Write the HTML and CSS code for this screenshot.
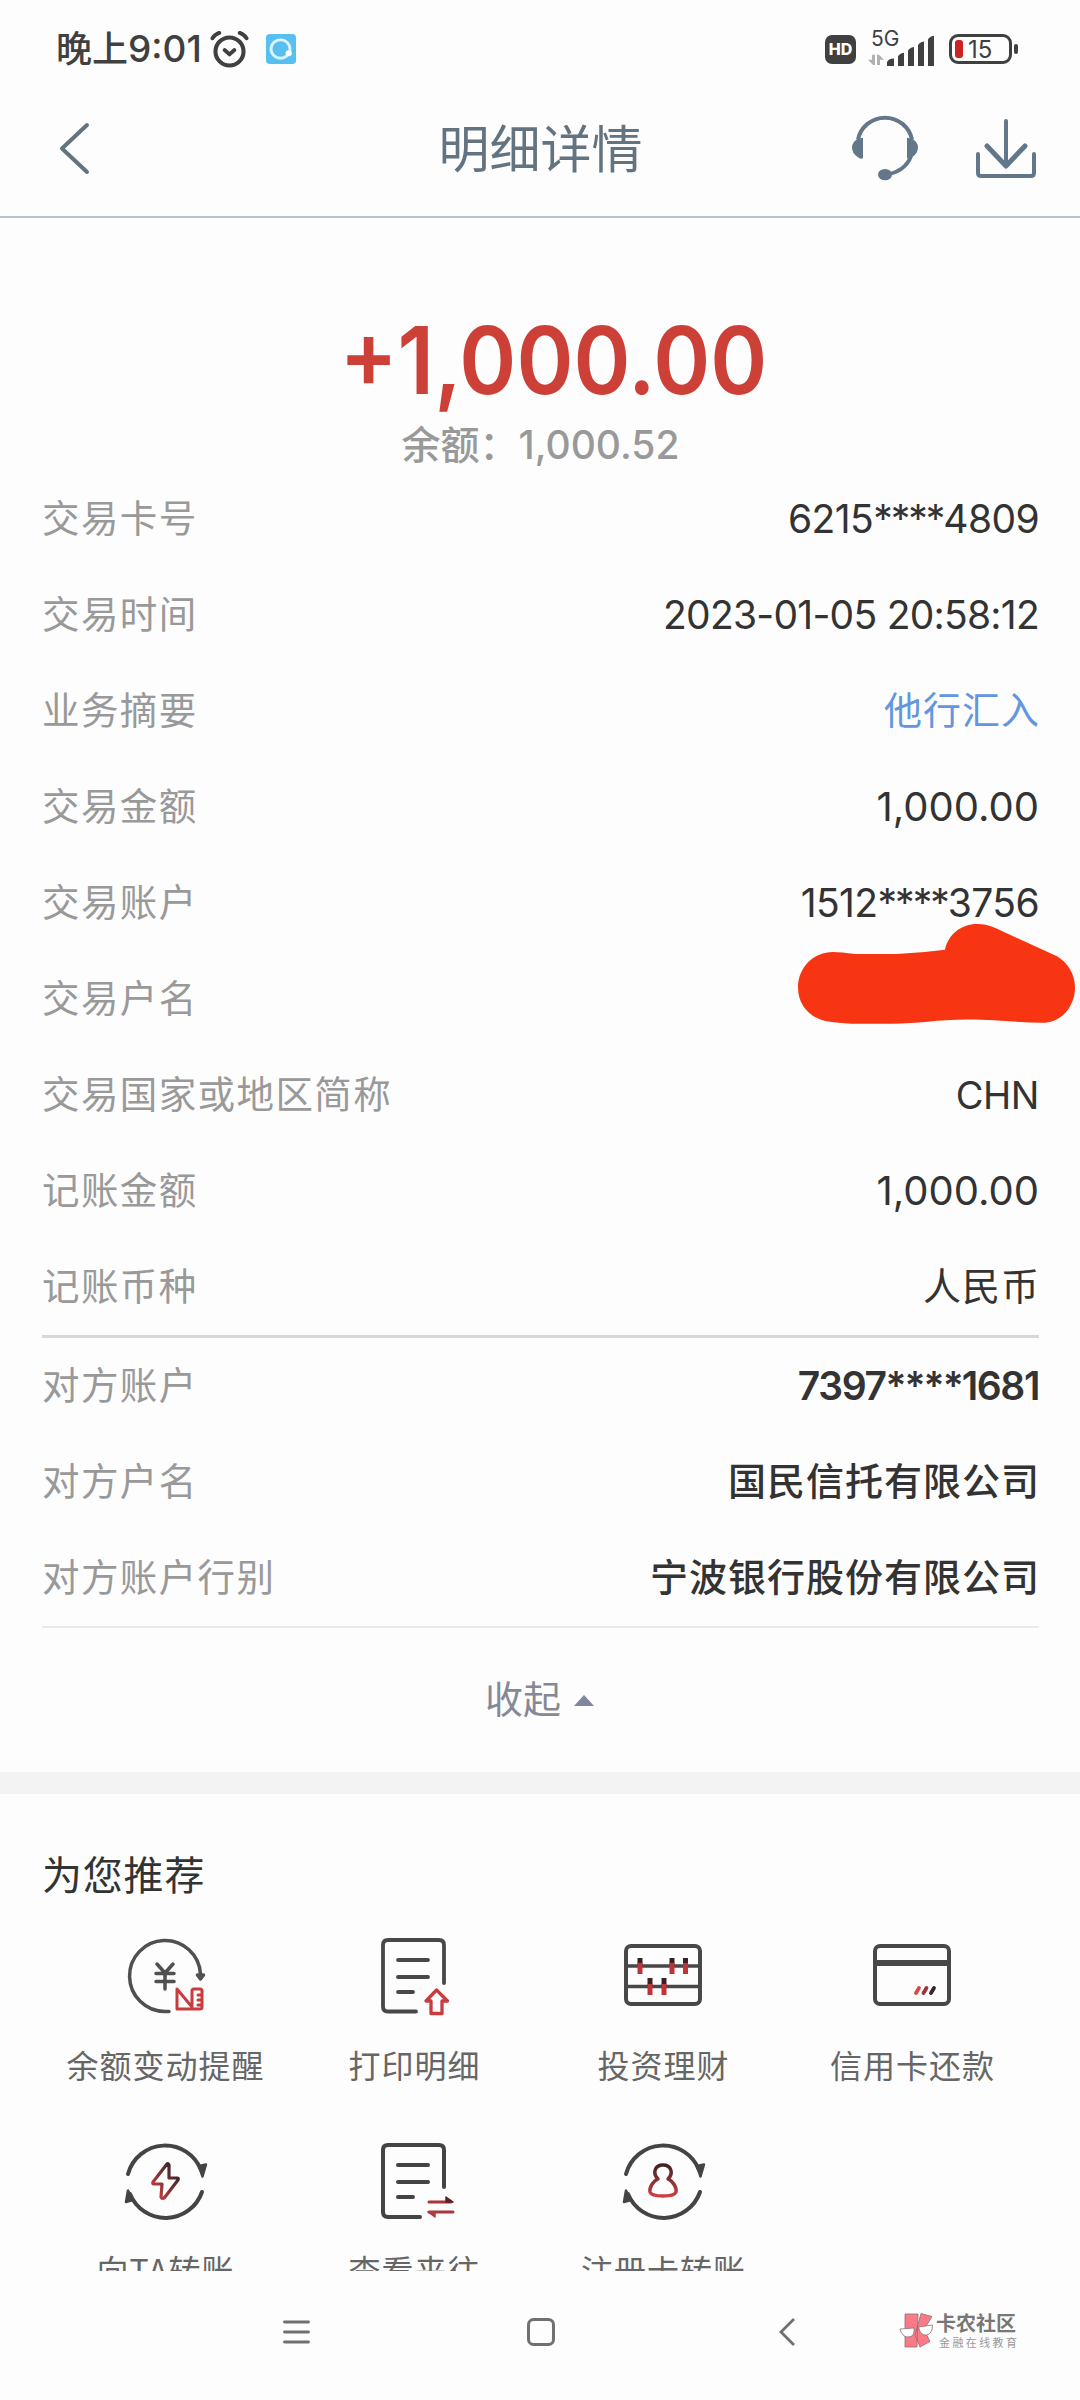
FILE: index.html
```html
<!DOCTYPE html>
<html lang="zh-CN">
<head>
<meta charset="UTF-8">
<meta name="viewport" content="width=device-width, initial-scale=1.0">
<title>明细详情</title>
<link rel="stylesheet" href="styles.css">
</head>
<body>
<div class="screen">
    <div class="status-bar">
        <span class="clock">晚上<span class="clock-time">9:01</span></span>
        <svg class="alarm" width="39" height="37" viewBox="0 0 40 38" fill="none" stroke="#404040" stroke-linecap="round">
            <circle cx="20" cy="21" r="14.4" stroke-width="4.2"/>
            <path d="M15 19.5l5 4.5 5-4.5" stroke-width="4" stroke-linejoin="round"/>
            <path d="M2.5 7.5Q5 3.5 9.5 2M37.5 7.5Q35 3.5 30.5 2" stroke-width="4"/>
        </svg>
        <svg class="app-badge" width="30" height="30" viewBox="0 0 31 32" preserveAspectRatio="none">
            <rect width="31" height="32" rx="4" fill="#58c0f0"/>
            <circle cx="15" cy="16" r="9.8" fill="none" stroke="#d9f3ff" stroke-width="3"/>
            <circle cx="23.5" cy="20.5" r="3.2" fill="#fff"/>
        </svg>
        <span class="spacer"></span>
        <span class="hd">HD</span>
        <div class="network">
            <span class="network-type">5G</span>
            <svg width="68" height="35" viewBox="0 0 68 37" preserveAspectRatio="none">
                <path d="M4 25h3v11H5L0 30.5h4zM9 36V25h2l5 5.5h-4V36z" fill="#b0b0b0"/>
                <path d="M19 37v-4q1-4 7-4v8zM30 37V27q1-3 6-4v14zM40 37V21q1-3 6-4v20zM50 37V15q1-3 6-4v26zM60 37V9q1-3 6-4v32z" fill="#404040"/>
            </svg>
        </div>
        <div class="battery"><i></i><span>15</span></div>
        <span class="battery-tip"></span>
    </div>

    <div class="title-bar">
        <svg class="back" width="34" height="55" viewBox="0 0 34 55" fill="none" stroke="#63737f" stroke-width="4" stroke-linecap="round" stroke-linejoin="round">
            <path d="M30 4L5 27.5 30 51"/>
        </svg>
        <h1>明细详情</h1>
        <div class="title-actions">
            <svg width="68" height="67" viewBox="0 0 68 68" preserveAspectRatio="none">
                <path d="M7 26a27.500 27.500 0 0 1 54 0M60 43Q54 58 36 61.500" fill="none" stroke="#63778a" stroke-width="4"/>
                <path d="M12 24v21q-3 1-5-1-6-4-6-10t6-9zM56 24v21q3 1 5-1 6-4 6-10t-6-9z" fill="#63778a"/>
                <ellipse cx="34" cy="61.500" rx="7" ry="5.800" fill="#63778a"/>
            </svg>
            <svg class="download" width="60" height="61" viewBox="0 0 60 61" fill="none" stroke="#63778a" stroke-width="4" stroke-linecap="round" stroke-linejoin="round">
                <path d="M30 3v44"/>
                <path d="M11 28l19 20 19-20" stroke-width="5"/>
                <path d="M2 36v19q0 3 3 3h50q3 0 3-3V36"/>
            </svg>
        </div>
    </div>

    <div class="content">
        <div class="summary">
            <div class="amount">+1,000.00</div>
            <div class="balance">余额：<span>1,000.52</span></div>
        </div>

        <div class="details">
            <div class="row"><span class="label">交易卡号</span><span class="value masked">6215<i>****</i>4809</span></div>
            <div class="row"><span class="label">交易时间</span><span class="value date">2023-01-05 20:58:12</span></div>
            <div class="row"><span class="label">业务摘要</span><a class="value zh link">他行汇入</a></div>
            <div class="row"><span class="label">交易金额</span><span class="value money">1,000.00</span></div>
            <div class="row"><span class="label">交易账户</span><span class="value masked">1512<i>****</i>3756</span></div>
            <div class="row">
                <span class="label">交易户名</span>
                <svg class="scribble" width="280" height="103" viewBox="0 0 280 96" preserveAspectRatio="none">
                    <path d="M36 27Q44 27 58 29H100Q124 28 148 25C151 11 164 1 180 1Q190 1 199 5L260 31C271 37 278 48 278 60C278 78 264 93 246 93C222 93 200 90 171 90C140 90 120 94 96 94H54Q40 93 33 92C14 90 1 77 1 60C1 41 17 27 36 27Z" fill="#f73512"/>
                </svg>
            </div>
            <div class="row"><span class="label">交易国家或地区简称</span><span class="value country">CHN</span></div>
            <div class="row"><span class="label">记账金额</span><span class="value money">1,000.00</span></div>
            <div class="row"><span class="label">记账币种</span><span class="value zh">人民币</span></div>
        </div>

        <div class="details counterparty">
            <div class="row"><span class="label">对方账户</span><span class="value masked strong">7397<i>****</i>1681</span></div>
            <div class="row"><span class="label">对方户名</span><span class="value zh strong">国民信托有限公司</span></div>
            <div class="row"><span class="label">对方账户行别</span><span class="value zh strong">宁波银行股份有限公司</span></div>
        </div>

        <div class="collapse">收起<i></i></div>
    </div>

    <div class="recommend">
        <h2>为您推荐</h2>
        <div class="grid">
            <div class="item">
                <svg width="90" height="90" viewBox="0 0 90 90" fill="none" stroke="#505050" stroke-width="3.500" stroke-linecap="round" stroke-linejoin="round">
                    <path d="M49 80.500H45A35.500 35.500 0 1 1 80.500 43"/>
                    <path d="M77.500 44h6l-3 4z" fill="#505050"/>
                    <path d="M37 33l8 9 8-9M45 42v16M36 42.500h18M36 50.500h18"/>
                    <path d="M57 58v20h23q2 0 2-2V60q0-2-2-2h-6q-2 0-2 2v16zM72 75v3M78 64h3M78 69h3M78 74h3" stroke="#c93c3e" stroke-width="3"/>
                </svg>
                <span>余额变动提醒</span>
            </div>
            <div class="item">
                <svg width="90" height="90" viewBox="0 0 90 90" fill="none" stroke="#484848" stroke-width="3.800" stroke-linecap="round" stroke-linejoin="round">
                    <path d="M47 80.500H19q-5 0-5-5V14q0-5 5-5h51q5 0 5 5v38"/>
                    <path d="M29 29h30M29 46h30M29 61h15"/>
                    <path d="M67.500 59L57 70h5v12.500h11V70h5.500z" stroke="#c93c3e" stroke-width="3.300"/>
                </svg>
                <span>打印明细</span>
            </div>
            <div class="item">
                <svg width="90" height="90" viewBox="0 0 90 90" fill="none" stroke="#484848" stroke-width="4" stroke-linejoin="round">
                    <rect x="8" y="15" width="74" height="58" rx="5"/>
                    <path d="M8 35h74M8 55.500h74" stroke-width="3.500"/>
                    <path d="M22 27v9M54 27v9M67.500 27v9M32 47v9M46 47v9" stroke="#3b2024" stroke-width="5"/>
                    <path d="M22 32v11M54 32v11M67.500 32v11M32 53v11M46 53v11" stroke="#bf3436" stroke-width="5"/>
                </svg>
                <span>投资理财</span>
            </div>
            <div class="item">
                <svg width="90" height="90" viewBox="0 0 90 90" fill="none" stroke="#484848" stroke-width="4" stroke-linejoin="round">
                    <rect x="8" y="15" width="74" height="58" rx="5"/>
                    <path d="M8 32h74" stroke-width="6"/>
                    <g stroke-width="3.800" stroke-linecap="round">
                        <path d="M52 57l-3 5" stroke="#d9494c"/>
                        <path d="M59.500 57l-3 5" stroke="#923a40"/>
                        <path d="M67 57l-3 5" stroke="#3b2528"/>
                    </g>
                </svg>
                <span>信用卡还款</span>
            </div>
            <div class="item">
                <svg width="90" height="90" viewBox="0 0 90 90" fill="none" stroke="#444" stroke-width="4" stroke-linecap="round" stroke-linejoin="round">
                    <path d="M8 38A38.500 38.500 0 0 1 81 34M82 56A38.500 38.500 0 0 1 10 58"/>
                    <path d="M79 30l7-1.500-3.500 12zM8 54.500l-2 11.500 7-2z" fill="#444" stroke-width="2.500"/>
                    <path d="M47 28L33 46q-1 2 1 2h8l-1 13q1 3 4 0l13-17q1-2-1-2h-8V29q-1-2-2-1z" stroke="url(#bolt)" stroke-width="3.200"/>
                    <defs>
                        <linearGradient id="bolt" x1="0" y1="1" x2=".8" y2="0.200">
                            <stop offset="0" stop-color="#dc4347"/>
                            <stop offset="1" stop-color="#43262a"/>
                        </linearGradient>
                    </defs>
                </svg>
                <span>向TA转账</span>
            </div>
            <div class="item">
                <svg width="90" height="90" viewBox="0 0 90 90" fill="none" stroke="#444" stroke-width="4" stroke-linecap="round" stroke-linejoin="round">
                    <path d="M51 81H19q-5 0-5-5V14q0-5 5-5h51q5 0 5 5v37"/>
                    <path d="M29 29h30M29 46h30M29 61h15"/>
                    <path d="M60 66h22M60 76h24" stroke="#a93639" stroke-width="3"/>
                    <path d="M77 61l7 5h-7z" fill="#5a2529" stroke="#5a2529" stroke-width="1.500"/>
                    <path d="M59 76h7v5z" fill="#b8383c" stroke="#b8383c" stroke-width="1.500"/>
                </svg>
                <span>查看来往</span>
            </div>
            <div class="item">
                <svg width="90" height="90" viewBox="0 0 90 90" fill="none" stroke="#444" stroke-width="4" stroke-linecap="round" stroke-linejoin="round">
                    <path d="M8 38A38.500 38.500 0 0 1 81 34M82 56A38.500 38.500 0 0 1 10 58"/>
                    <path d="M79 30l7-1.500-3.500 12zM8 54.500l-2 11.500 7-2z" fill="#444" stroke-width="2.500"/>
                    <path d="M40 43c-6-6-3-14 5-14s11 8 5 14c5 2 9 9 8 13-1 3-7 4-13 4s-12-1-13-4c-1-4 3-11 8-13z" stroke="url(#person)" stroke-width="3.500"/>
                    <defs>
                        <linearGradient id="person" x1="0" y1="1" x2="0" y2="0">
                            <stop offset="0" stop-color="#cf3d41"/>
                            <stop offset="1" stop-color="#3f2427"/>
                        </linearGradient>
                    </defs>
                </svg>
                <span>注册卡转账</span>
            </div>
        </div>
    </div>

    <div class="nav-bar">
        <svg class="nav-menu" width="28" height="28" viewBox="0 0 28 28" stroke="#707070" stroke-width="2.800" stroke-linecap="round"><path d="M2.500 4h24M2.500 14h24M2.500 24h24"/></svg>
        <svg class="nav-home" width="28" height="28" viewBox="0 0 28 28" fill="none" stroke="#707070" stroke-width="3"><rect x="1.500" y="1.500" width="25" height="25" rx="5"/></svg>
        <svg class="nav-back" width="18" height="28" viewBox="0 0 18 28" fill="none" stroke="#707070" stroke-width="2.800"><path d="M16 1L3 14l13 13"/></svg>
        <div class="watermark">
            <svg width="36" height="36" viewBox="0 0 36 36" stroke="#8a7075" stroke-width=".8">
                <path d="M6 1h13l-1 33H6zM22 .5l11 3-8 13 6 12-10 5.500-5-12z" fill="#fb7a86"/>
                <path d="M1 16l14-1q1 9-6 9-6 0-8-8zM19.500 14l14-2q0 9-6 10-6 1-8-8z" fill="#fff"/>
            </svg>
            <div class="watermark-text"><b>卡农社区</b><small>金融在线教育</small></div>
        </div>
    </div>
</div>
</body>
</html>
```
FILE: styles.css
```css
* {
    box-sizing: border-box;
}
body {
    margin: 0;
    background: #fdfdfd;
    font-family: Inter, 'Noto Sans CJK SC', sans-serif;
    color: #333;
}
.screen {
    width: 1080px;
    height: 2400px;
    display: flex;
    flex-direction: column;
    overflow: hidden;
}
svg {
    display: block;
    flex: none;
}

/* Status bar */
.status-bar {
    height: 100px;
    padding: 0 62px 2px 56px;
    display: flex;
    align-items: center;
    color: #404040;
}
.clock {
    font-size: 36px;
    font-weight: 500;
    line-height: 50px;
    margin-top: -1px;
    white-space: nowrap;
}
.clock-time {
    font-size: 37px;
}
.alarm {
    margin-left: 8px;
}
.app-badge {
    margin-left: 17px;
}
.spacer {
    flex: 1;
}
.hd {
    width: 31px;
    height: 29px;
    border-radius: 7px;
    background: #404040;
    color: #fff;
    font-size: 16px;
    font-weight: 800;
    line-height: 29px;
    text-align: center;
}
.network {
    position: relative;
    margin: 0 13px 2px 12px;
}
.network-type {
    position: absolute;
    left: 3px;
    top: -4px;
    font-size: 21px;
    line-height: 24px;
}
.battery {
    width: 63px;
    height: 30px;
    border: 3px solid #404040;
    border-radius: 9px;
    display: flex;
    align-items: center;
    padding-left: 3px;
    font-size: 24px;
}
.battery i {
    width: 8px;
    height: 18px;
    border-radius: 3px;
    background: #cc2222;
    margin-right: 5px;
}
.battery-tip {
    width: 4px;
    height: 10px;
    margin-left: 2px;
    border-radius: 2px;
    background: #404040;
}

/* Title bar */
.title-bar {
    height: 118px;
    border-bottom: 2px solid #b7c4cc;
    padding: 0 44px 0 57px;
    display: grid;
    grid-template-columns: 1fr auto 1fr;
    align-items: start;
}
.back {
    margin-top: 21px;
}
.title-bar h1 {
    margin: 13px 12px 0 0;
    font-size: 51px;
    font-weight: 400;
    line-height: 74px;
    color: #63737f;
}
.title-actions {
    display: flex;
    justify-content: flex-end;
    gap: 57px;
    padding-top: 14px;
}
.download {
    margin-top: 4px;
}

/* Amount and detail rows */
.content {
    padding: 0 41px 0 42px;
}
.summary {
    height: 253px;
    padding-top: 97px;
    text-align: center;
}
.amount {
    font-size: 94px;
    font-weight: 600;
    line-height: 90px;
    color: #cc4037;
    padding-left: 28px;
    transform: scaleX(.92); /* narrower digits */
}
.balance {
    margin-top: 12px;
    font-size: 39px;
    font-weight: 500;
    line-height: 56px;
    color: #999;
}
.row {
    height: 96px;
    display: flex;
    justify-content: space-between;
    align-items: center;
    position: relative;
    white-space: nowrap;
}
.label {
    font-size: 37.5px;
    letter-spacing: 1.4px;
    padding-bottom: 7px;
    color: #999;
}
.value {
    font-size: 38px;
    padding-bottom: 1px;
}
.value.zh {
    letter-spacing: 1px;
    margin-right: -1px;
    padding-bottom: 7px;
}
.masked {
    font-size: 39px;
    letter-spacing: -.6px;
}
.masked i {
    font-style: normal;
    letter-spacing: -2px;
}
.masked.strong {
    letter-spacing: -1.4px;
}
.date {
    font-size: 39px;
    letter-spacing: -.75px;
}
.money {
    font-size: 40px;
}
.country {
    letter-spacing: -.5px;
}
.link {
    color: #6496df;
}
.strong {
    font-weight: 600;
}
.zh.strong {
    font-weight: 500;
}
.scribble {
    position: absolute;
    right: -38px;
    top: -28px;
}
.counterparty {
    border-top: 3px solid #d6d8d8;
    border-bottom: 2px solid #e8eaea;
}
.collapse {
    height: 144px;
    padding-bottom: 8px;
    display: flex;
    justify-content: center;
    align-items: center;
    font-size: 38px;
    color: #858895;
}
.collapse i {
    border: 10px solid transparent;
    border-top: 0;
    border-bottom: 11px solid #7f879c;
    margin: 9px 2px 0 13px;
}

/* Recommended services */
.recommend {
    border-top: 22px solid #f3f3f3;
    height: 499px;
    padding: 0 40px;
    overflow: hidden;
}
.recommend h2 {
    margin: 53px 0 0 2px;
    font-size: 40px;
    font-weight: 400;
    line-height: 58px;
    letter-spacing: .8px;
}
.grid {
    display: grid;
    grid-template-columns: repeat(4, 249px);
    grid-auto-rows: 205px;
    margin-top: 26px;
}
.item {
    display: flex;
    flex-direction: column;
    align-items: center;
    font-family: 'Noto Sans CJK SC', sans-serif;
    font-size: 32px;
    letter-spacing: 1px;
    line-height: 46px;
    color: #666;
}
.item span {
    margin-top: 20px;
    padding-left: 2px;
}

/* Bottom navigation */
.nav-bar {
    flex: 1;
    display: flex;
    padding: 47px 60px 0 282px;
}
.nav-home {
    margin-left: 217px;
}
.nav-back {
    margin-left: 223px;
}
.watermark {
    display: flex;
    margin: -5px 0 0 103px;
}
.watermark-text {
    display: flex;
    flex-direction: column;
    margin-left: 1px;
    color: #777;
    white-space: nowrap;
}
.watermark-text b {
    font-size: 20px;
    line-height: 22px;
}
.watermark-text small {
    margin: 1px 0 0 3px;
    font-size: 11px;
    line-height: 14px;
    letter-spacing: 2.4px;
    color: #999;
}
```
